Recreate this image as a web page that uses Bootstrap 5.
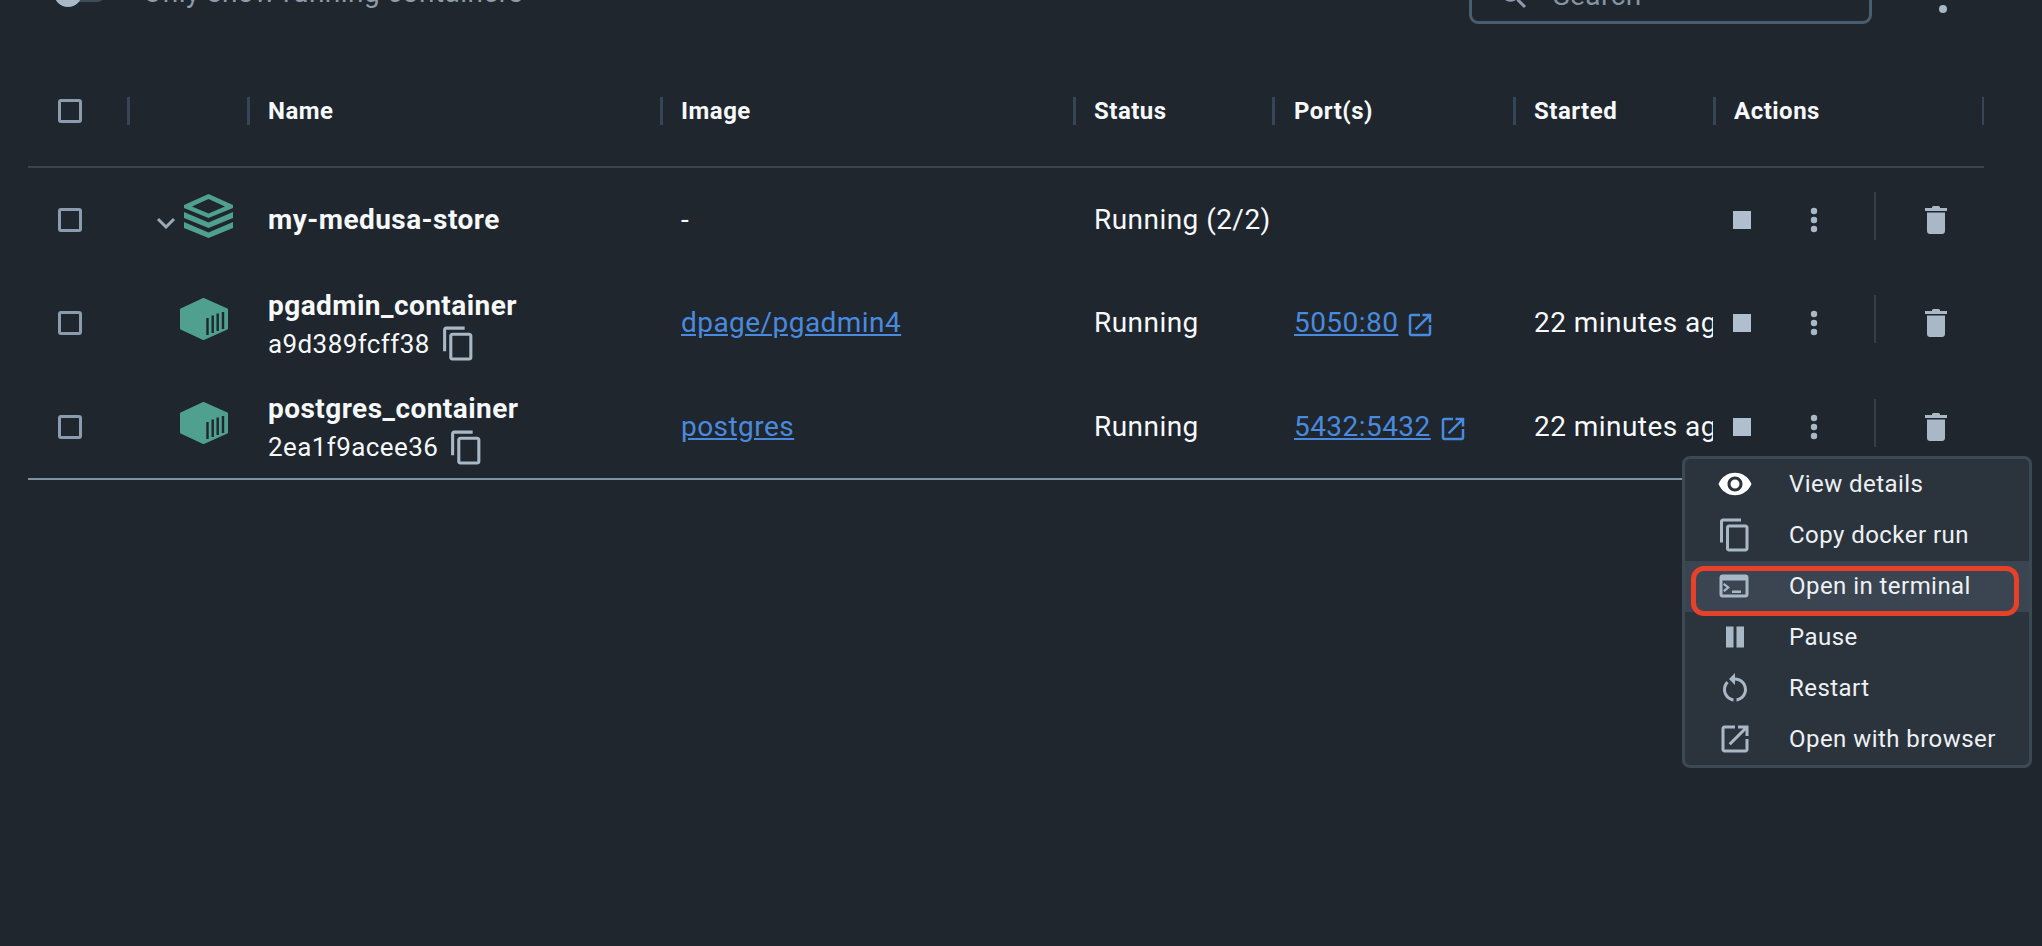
<!DOCTYPE html>
<html lang="en">
<head>
<meta charset="utf-8">
<title>Containers</title>
<link href="https://cdn.jsdelivr.net/npm/bootstrap@5.3.0/dist/css/bootstrap.min.css" rel="stylesheet">
<style>
html,body{height:100%;overflow:hidden}
body{background:#1f262d;color:#f6f8fa;font-family:Roboto,"Liberation Sans",sans-serif;font-size:28px;letter-spacing:.45px}
.dd-page{position:relative;display:flow-root;height:946px;padding-left:28px;width:2042px}
.dd-toolbar{height:56px;margin-top:-32px;width:1956px}
.dd-switch{width:52px;height:18px;margin-left:26px;margin-bottom:6px;border-radius:9px;background:#3f4d5b;position:relative}
.dd-knob{position:absolute;left:0;top:-5px;width:28px;height:28px;border-radius:50%;background:#a9b8c7}
.dd-switch-label{margin-left:37px;margin-bottom:6px;font-size:28px;color:#8e9cab;letter-spacing:.45px}
.dd-search{position:relative;width:403px;height:56px;margin-left:auto;border:3px solid #4a5d70;border-radius:9px;padding-left:25px;gap:22px;color:#8695a3;font-size:28px}
.dd-top-kebab{margin-left:66px;margin-right:36px}
.dd-table{width:1956px;table-layout:fixed;margin:31px 0 0;--bs-table-bg:transparent;--bs-table-color:#f6f8fa;--bs-table-border-color:transparent;border-collapse:collapse}
.dd-table>thead>tr>th{height:112px;padding:0;vertical-align:middle;border-bottom:2px solid #3a444d;font-size:24px;font-weight:700;letter-spacing:.5px}
.dd-head{height:28px;border-left:3px solid #364656;padding-left:18px;display:flex;align-items:center}
.dd-head-last{border-right:2px solid #364656}
.dd-table>tbody>tr>td{height:104px;padding:0 0 0 21px;vertical-align:middle;border-bottom:0;box-shadow:none;white-space:nowrap;overflow:hidden}
.dd-table>tbody>tr:last-child>td{border-bottom:2px solid #7d92a5}
.dd-table th.dd-port .dd-head{padding-left:19px}
.dd-table>tbody>tr>td.dd-port{padding-left:22px}
.dd-table>tbody>tr>td.dd-check,.dd-table>thead>tr>th.dd-check{padding-left:30px}
.dd-table>tbody>tr>td.dd-icon-cell{padding:0}
.dd-table>tbody>tr>td.dd-actions{padding-left:20px;overflow:visible}
.dd-table>tbody>tr>td.dd-two{padding-top:3px}
.dd-box[type=checkbox]{width:24px;height:24px;margin:0;display:block;background-color:transparent;border:3px solid #8a9cad;border-radius:3px}
.dd-chevron{margin-left:29px;margin-right:8px;margin-top:6px}
.dd-stack{margin-top:-8px}
.dd-cube{margin-left:53px;margin-top:-8px}
.dd-name{font-weight:700;font-size:28px;line-height:38px;letter-spacing:.45px}
.dd-id{font-size:26px;line-height:38px;letter-spacing:.4px;gap:10px}
.dd-link{color:#4a8ade}
.dd-link:hover{color:#4a8ade}
.dd-ext{margin-left:7px;vertical-align:-8px;fill:#4a8ade}
.dd-stop{width:18px;height:18px;background:#b0bfcd;display:block}
.dd-act-gap1{margin-left:57px}
.dd-act-gap2{margin-left:54px;width:2px;height:48px;margin-bottom:8px;background:#333f4a}
.dd-act-gap3{margin-left:49px}
.dd-menu{position:absolute;display:block;left:1682px;top:456px;width:350px;height:312px;padding:0;margin:0;background:#2b343d;border:3px solid #3b4955;border-radius:8px;--bs-dropdown-min-width:0}
.dd-item{position:relative;display:flex;align-items:center;height:51px;padding:0 0 2px 32px;gap:36px;color:#eef1f4;font-size:24px;letter-spacing:.45px}
.dd-item:hover{color:#eef1f4;background:transparent}
.dd-item.dd-hot,.dd-item.dd-hot:hover{background:#3a4551}
.dd-item svg{flex:none;fill:#a9b8c7}
.dd-item svg.dd-white{fill:#fff}
.dd-redbox{position:absolute;left:6px;top:5px;width:328px;height:50px;border:5px solid #e8412a;border-radius:13px}
</style>
</head>
<body>
<div class="dd-page">
  <div class="dd-toolbar d-flex align-items-center">
    <div class="dd-switch"><span class="dd-knob"></span></div>
    <span class="dd-switch-label">Only show running containers</span>
    <div class="dd-search d-flex align-items-center">
      <svg width="34" height="34" viewBox="0 0 24 24" fill="#8e9cab"><path d="M15.5 14h-.79l-.28-.27C15.41 12.59 16 11.11 16 9.5 16 5.91 13.09 3 9.5 3S3 5.91 3 9.5 5.91 16 9.5 16c1.61 0 3.09-.59 4.23-1.57l.27.28v.79l5 4.99L20.49 19l-4.99-5zm-6 0C7.01 14 5 11.99 5 9.5S7.01 5 9.5 5 14 7.01 14 9.5 11.99 14 9.5 14z"/></svg>
      <span>Search</span>
    </div>
    <svg class="dd-top-kebab" width="10" height="36" viewBox="0 0 10 36" fill="#a9b8c7"><circle cx="5" cy="5" r="4"/><circle cx="5" cy="18" r="4"/><circle cx="5" cy="31" r="4"/></svg>
  </div>

  <table class="table dd-table">
    <colgroup>
      <col style="width:99px"><col style="width:120px"><col style="width:413px"><col style="width:413px"><col style="width:199px"><col style="width:241px"><col style="width:200px"><col style="width:271px">
    </colgroup>
    <thead>
      <tr>
        <th class="dd-check"><input class="form-check-input dd-box" type="checkbox" aria-label="Select all"></th>
        <th><div class="dd-head"></div></th>
        <th><div class="dd-head">Name</div></th>
        <th><div class="dd-head">Image</div></th>
        <th><div class="dd-head">Status</div></th>
        <th class="dd-port"><div class="dd-head">Port(s)</div></th>
        <th><div class="dd-head">Started</div></th>
        <th><div class="dd-head dd-head-last">Actions</div></th>
      </tr>
    </thead>
    <tbody>
      <tr>
        <td class="dd-check"><input class="form-check-input dd-box" type="checkbox" aria-label="Select"></td>
        <td class="dd-icon-cell"><div class="d-flex align-items-center">
          <svg class="dd-chevron" width="20" height="12" viewBox="0 0 20 12" fill="none" stroke="#9aa9b8" stroke-width="3"><polyline points="2,2 10,10 18,2"/></svg>
          <svg class="dd-stack" width="49" height="44" viewBox="0 0 49 44" fill="#4fa08e"><path fill-rule="evenodd" d="M24.5 0 49 11v3L24.500 24 0 14v-3zM24.500 5 8 12.500 24.500 19.500 41 12.500z"/><path d="M0 18 24.500 28.500 49 18v6L24.500 34 0 24zM0 28 24.500 38.500 49 28v6L24.500 44 0 34z"/></svg>
        </div></td>
        <td><div class="dd-name">my-medusa-store</div></td>
        <td>-</td>
        <td>Running (2/2)</td>
        <td class="dd-port"></td>
        <td></td>
        <td class="dd-actions"><div class="d-flex align-items-center">
          <span class="dd-stop"></span>
          <svg class="dd-act-gap1" width="12" height="30" viewBox="0 0 12 30" fill="#a9b8c7"><circle cx="6" cy="6" r="3.200"/><circle cx="6" cy="15" r="3.200"/><circle cx="6" cy="24" r="3.200"/></svg>
          <span class="dd-act-gap2"></span>
          <svg class="dd-act-gap3" width="22" height="28" viewBox="0 0 22 28" fill="#a9b8c7"><path d="M7 1.500C7 .7 7.700 0 8.500 0h5c.8 0 1.500.7 1.500 1.500V2h7v3H0V2h7zM2 6.500h18V25c0 1.700-1.300 3-3 3H5c-1.700 0-3-1.300-3-3z"/></svg>
        </div></td>
      </tr>
      <tr>
        <td class="dd-check"><input class="form-check-input dd-box" type="checkbox" aria-label="Select"></td>
        <td class="dd-icon-cell"><svg class="dd-cube d-block" width="48" height="42" viewBox="0 0 48 42"><path fill="#4fa08e" stroke="#4fa08e" stroke-width="2" stroke-linejoin="round" d="M23.500 1 47 11.500v19L23.500 41 1 30.500v-19z"/><path stroke="#1f262d" stroke-width="2.400" d="M27.500 20v17M32.700 17.500v17.500M37.700 15.500v17.500M43 14v17"/></svg></td>
        <td class="dd-two"><div class="dd-name">pgadmin_container</div>
          <div class="dd-id d-flex align-items-center">a9d389fcff38<svg width="37" height="37" viewBox="0 0 24 24" fill="#a9b8c7"><path d="M16 1H4c-1.100 0-2 .9-2 2v14h2V3h12V1zm3 4H8c-1.100 0-2 .9-2 2v14c0 1.100.9 2 2 2h11c1.100 0 2-.9 2-2V7c0-1.100-.9-2-2-2zm0 16H8V7h11v14z"/></svg></div></td>
        <td><a class="dd-link" href="#">dpage/pgadmin4</a></td>
        <td>Running</td>
        <td class="dd-port"><a class="dd-link" href="#">5050:80</a><svg class="dd-ext" width="30" height="30" viewBox="0 0 24 24"><path d="M19 19H5V5h7V3H5c-1.110 0-2 .9-2 2v14c0 1.100.89 2 2 2h14c1.100 0 2-.9 2-2v-7h-2v7zM14 3v2h3.590l-9.830 9.830 1.410 1.410L19 6.410V10h2V3h-7z"/></svg></td>
        <td>22 minutes ago</td>
        <td class="dd-actions"><div class="d-flex align-items-center">
          <span class="dd-stop"></span>
          <svg class="dd-act-gap1" width="12" height="30" viewBox="0 0 12 30" fill="#a9b8c7"><circle cx="6" cy="6" r="3.200"/><circle cx="6" cy="15" r="3.200"/><circle cx="6" cy="24" r="3.200"/></svg>
          <span class="dd-act-gap2"></span>
          <svg class="dd-act-gap3" width="22" height="28" viewBox="0 0 22 28" fill="#a9b8c7"><path d="M7 1.500C7 .7 7.700 0 8.500 0h5c.8 0 1.500.7 1.500 1.500V2h7v3H0V2h7zM2 6.500h18V25c0 1.700-1.300 3-3 3H5c-1.700 0-3-1.300-3-3z"/></svg>
        </div></td>
      </tr>
      <tr>
        <td class="dd-check"><input class="form-check-input dd-box" type="checkbox" aria-label="Select"></td>
        <td class="dd-icon-cell"><svg class="dd-cube d-block" width="48" height="42" viewBox="0 0 48 42"><path fill="#4fa08e" stroke="#4fa08e" stroke-width="2" stroke-linejoin="round" d="M23.500 1 47 11.500v19L23.500 41 1 30.500v-19z"/><path stroke="#1f262d" stroke-width="2.400" d="M27.500 20v17M32.700 17.500v17.500M37.700 15.500v17.500M43 14v17"/></svg></td>
        <td class="dd-two"><div class="dd-name">postgres_container</div>
          <div class="dd-id d-flex align-items-center">2ea1f9acee36<svg width="37" height="37" viewBox="0 0 24 24" fill="#a9b8c7"><path d="M16 1H4c-1.100 0-2 .9-2 2v14c0 0 0 0 0 0h2V3h12V1zm3 4H8c-1.100 0-2 .9-2 2v14c0 1.100.9 2 2 2h11c1.100 0 2-.9 2-2V7c0-1.100-.9-2-2-2zm0 16H8V7h11v14z"/></svg></div></td>
        <td><a class="dd-link" href="#">postgres</a></td>
        <td>Running</td>
        <td class="dd-port"><a class="dd-link" href="#">5432:5432</a><svg class="dd-ext" width="30" height="30" viewBox="0 0 24 24"><path d="M19 19H5V5h7V3H5c-1.110 0-2 .9-2 2v14c0 1.100.89 2 2 2h14c1.100 0 2-.9 2-2v-7h-2v7zM14 3v2h3.590l-9.830 9.830 1.410 1.410L19 6.410V10h2V3h-7z"/></svg></td>
        <td>22 minutes ago</td>
        <td class="dd-actions"><div class="d-flex align-items-center">
          <span class="dd-stop"></span>
          <svg class="dd-act-gap1" width="12" height="30" viewBox="0 0 12 30" fill="#a9b8c7"><circle cx="6" cy="6" r="3.200"/><circle cx="6" cy="15" r="3.200"/><circle cx="6" cy="24" r="3.200"/></svg>
          <span class="dd-act-gap2"></span>
          <svg class="dd-act-gap3" width="22" height="28" viewBox="0 0 22 28" fill="#a9b8c7"><path d="M7 1.500C7 .7 7.700 0 8.500 0h5c.8 0 1.500.7 1.500 1.500V2h7v3H0V2h7zM2 6.500h18V25c0 1.700-1.300 3-3 3H5c-1.700 0-3-1.300-3-3z"/></svg>
        </div></td>
      </tr>
    </tbody>
  </table>

  <ul class="dropdown-menu show dd-menu list-unstyled">
    <li><a class="dropdown-item dd-item" href="#"><svg class="dd-white" width="36" height="36" viewBox="0 0 24 24"><path d="M12 4.500C7 4.500 2.730 7.610 1 12c1.730 4.390 6 7.500 11 7.500s9.270-3.110 11-7.500c-1.730-4.390-6-7.500-11-7.500zM12 17c-2.760 0-5-2.240-5-5s2.240-5 5-5 5 2.240 5 5-2.240 5-5 5zm0-8c-1.660 0-3 1.340-3 3s1.340 3 3 3 3-1.340 3-3-1.340-3-3-3z"/></svg>View details</a></li>
    <li><a class="dropdown-item dd-item" href="#"><svg width="36" height="36" viewBox="0 0 24 24"><path d="M16 1H4c-1.100 0-2 .9-2 2v14h2V3h12V1zm3 4H8c-1.100 0-2 .9-2 2v14c0 1.100.9 2 2 2h11c1.100 0 2-.9 2-2V7c0-1.100-.9-2-2-2zm0 16H8V7h11v14z"/></svg>Copy docker run</a></li>
    <li><a class="dropdown-item dd-item dd-hot" href="#"><svg width="36" height="36" viewBox="0 0 36 36"><path fill-rule="evenodd" d="M5.500 6.500h23c1.700 0 3 1.300 3 3v17c0 1.700-1.300 3-3 3h-23c-1.700 0-3-1.300-3-3v-17c0-1.700 1.300-3 3-3zM5.500 12.500v14h23v-14z"/><path d="M7.500 15l5.500 4.500-5.500 4.500-1.500-1.700 3.500-2.800-3.500-2.800zM15 22.500h9v2.500h-9z"/></svg>Open in terminal<span class="dd-redbox"></span></a></li>
    <li><a class="dropdown-item dd-item" href="#"><svg width="36" height="36" viewBox="0 0 36 36"><path d="M9 7.500h7.500v21H9zM19.500 7.500H27v21h-7.500z"/></svg>Pause</a></li>
    <li><a class="dropdown-item dd-item" href="#"><svg width="36" height="36" viewBox="0 0 24 24"><path d="M12 5V2L8 6l4 4V7c3.310 0 6 2.690 6 6 0 2.970-2.170 5.430-5 5.910v2.020c3.950-.49 7-3.850 7-7.930 0-4.420-3.580-8-8-8zm-6 8c0-1.650.67-3.150 1.760-4.240L6.340 7.340C4.900 8.790 4 10.790 4 13c0 4.080 3.050 7.440 7 7.930v-2.020c-2.830-.48-5-2.940-5-5.910z"/></svg>Restart</a></li>
    <li><a class="dropdown-item dd-item" href="#"><svg width="36" height="36" viewBox="0 0 24 24"><path d="M19 19H5V5h7V3H5c-1.110 0-2 .9-2 2v14c0 1.100.89 2 2 2h14c1.100 0 2-.9 2-2v-7h-2v7zM14 3v2h3.590l-9.830 9.830 1.410 1.410L19 6.410V10h2V3h-7z"/></svg>Open with browser</a></li>
  </ul>
</div>
<script src="https://cdn.jsdelivr.net/npm/bootstrap@5.3.0/dist/js/bootstrap.bundle.min.js"></script>
</body>
</html>
